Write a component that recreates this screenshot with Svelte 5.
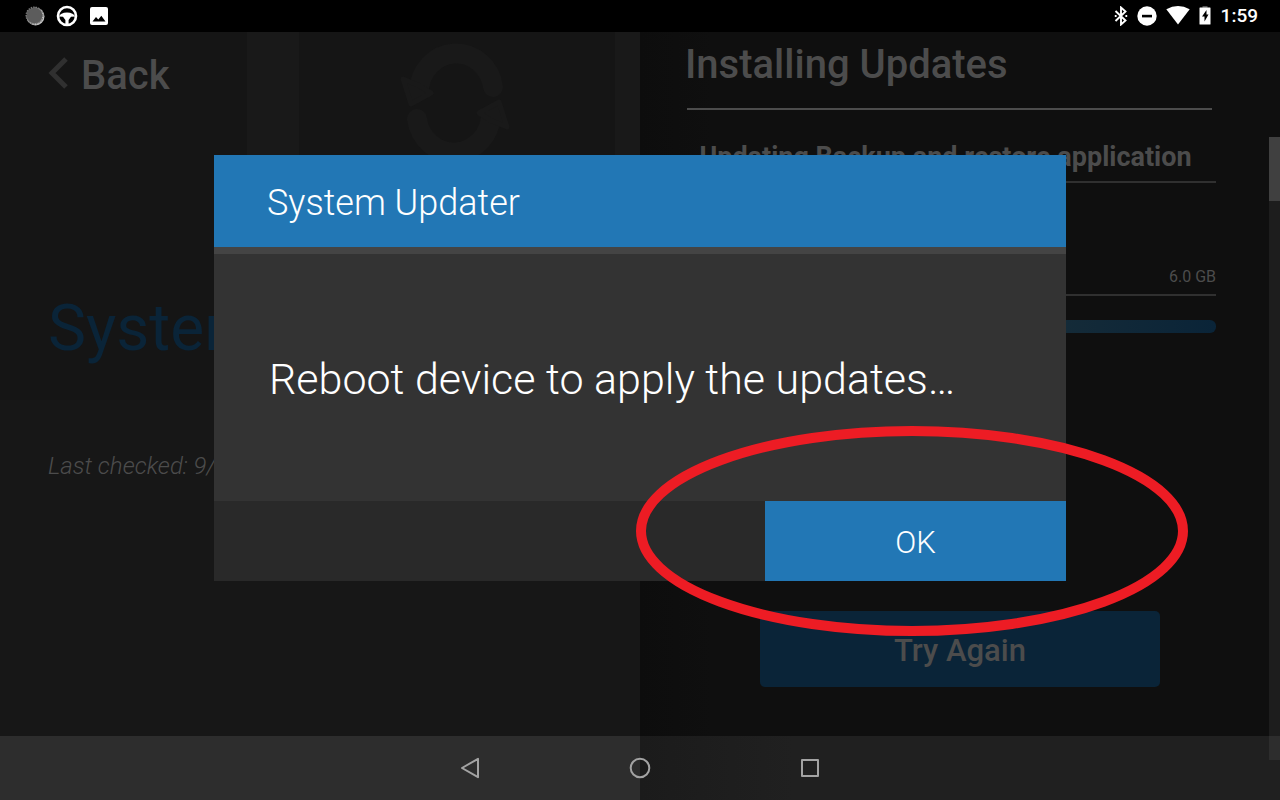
<script lang="ts">
	let dialogOpen = $state(true);

	const title = 'System Updater';
	const message = 'Reboot device to apply the updates…';
	const time = '1:59';

	function closeDialog() {
		dialogOpen = false;
	}
</script>

<div class="device">
	<header class="status-bar">
		<div class="status-group left">
			<svg width="20" height="20" viewBox="0 0 20 20" aria-hidden="true">
				<circle cx="10.500" cy="10.500" r="9" fill="#c4c4c4" />
				<circle cx="9.500" cy="9.500" r="8" fill="#5c5c5c" />
				<circle cx="9.500" cy="9.500" r="8.300" fill="none" stroke="#777" stroke-width="1.500" stroke-dasharray="1.500 1" />
			</svg>
			<svg width="22" height="22" viewBox="0 0 22 22" aria-hidden="true">
				<circle cx="11" cy="11" r="9" fill="none" stroke="#fff" stroke-width="2.600" />
				<path d="M2.500 11.500 L5 9 Q11 6.200 17 9 L19.500 11.500 L15 11.800 L12.600 15 L12.600 19.500 H9.400 V15 L7 11.800 Z" fill="#fff" />
			</svg>
			<svg width="20" height="20" viewBox="0 0 20 20" aria-hidden="true">
				<rect x="1" y="1" width="18" height="18" rx="2" fill="#fff" />
				<path d="M3.500 15.500 L7 11 L9.300 13.600 L12.300 9.800 L16.500 15.500 Z" fill="#000" />
			</svg>
		</div>
		<div class="status-group right">
			<svg width="14" height="20" viewBox="0 0 14 20" fill="none" stroke="#fff" stroke-width="1.900" aria-hidden="true">
				<path d="M1.500 5 L11.500 14.500 L7 18.500 V1.500 L11.500 5.500 L1.500 15" />
				<path d="M0.800 10 H2.600 M11.400 10 H13.200" />
			</svg>
			<svg width="20" height="20" viewBox="0 0 20 20" aria-hidden="true">
				<circle cx="10" cy="10" r="9.700" fill="#fff" />
				<rect x="5" y="8.800" width="10" height="2.600" fill="#000" />
			</svg>
			<svg width="24" height="20" viewBox="0 0 24 20" aria-hidden="true">
				<path d="M0.300 3.200 Q12 -3.200 23.700 3.200 L12 18.500 Z" fill="#fff" />
			</svg>
			<svg width="12" height="20" viewBox="0 0 12 20" aria-hidden="true">
				<path d="M3.500 -0.500 H8.500 V2 H3.500 Z" fill="#555" />
				<rect x="0.500" y="1.500" width="11" height="17" rx="0.500" fill="#fff" />
				<path d="M7.500 4 L3 10.500 H5.500 V15.500 L9.500 8.500 H7.500 Z" fill="#000" />
			</svg>
			<span class="clock">{time}</span>
		</div>
	</header>

	<main class="panels">
		<section class="panel overview">
			<div class="hero">
				<svg class="hero-art" width="112" height="120" viewBox="0 0 112 120" aria-hidden="true">
					<g fill="none" stroke="#191919" stroke-width="20" stroke-linecap="round">
						<path d="M93 44 A37.200 39 0 0 0 19 48" />
						<path d="M17 76 A37.200 39 0 0 0 91 72" />
					</g>
					<g fill="#191919" stroke="#191919" stroke-width="5" stroke-linejoin="round">
						<path d="M3 36 L11 61 L31 50 L18 42 Z" />
						<path d="M107 84 L99 59 L79 70 L92 78 Z" />
					</g>
				</svg>
				<button class="back" type="button">
					<svg width="20" height="32" viewBox="0 0 20 32" aria-hidden="true">
						<path d="M18 2 L4 16 L18 30" fill="none" stroke="#303030" stroke-width="5" />
					</svg>
					Back
				</button>
				<h1>System</h1>
			</div>
			<p class="checked">Last checked: 9/</p>
		</section>

		<section class="panel progress">
			<h2>Installing Updates</h2>
			<div class="details">
				<p class="current">Updating Backup and restore application</p>
				<p class="size">6.0 GB</p>
				<div class="bar"></div>
			</div>
			<button class="retry" type="button">Try Again</button>
			<div class="scrollbar"><div class="thumb"></div></div>
		</section>
	</main>

	<nav class="nav-bar">
		<button type="button" aria-label="Back">
			<svg width="24" height="24" viewBox="0 0 24 24">
				<path d="M20 2.800 V21.200 L4 12 Z" />
			</svg>
		</button>
		<button type="button" aria-label="Home">
			<svg width="24" height="24" viewBox="0 0 24 24">
				<circle cx="12" cy="12" r="9.300" />
			</svg>
		</button>
		<button type="button" aria-label="Recent apps">
			<svg width="24" height="24" viewBox="0 0 24 24">
				<rect x="4" y="4" width="16" height="16" />
			</svg>
		</button>
	</nav>

	{#if dialogOpen}
		<div class="overlay">
			<div class="dialog" role="dialog" aria-labelledby="dialog-title">
				<h2 id="dialog-title" class="dialog-title">{title}</h2>
				<p class="dialog-message">{message}</p>
				<div class="dialog-actions">
					<button type="button" onclick={closeDialog}>OK</button>
				</div>
				<svg class="highlight" width="552" height="210" viewBox="0 0 552 210" aria-hidden="true">
					<ellipse cx="276" cy="105" rx="271" ry="100" fill="none" stroke="#ed1c24" stroke-width="10" />
				</svg>
			</div>
		</div>
	{/if}
</div>

<style>
	:global(body) {
		background: #000;
	}

	.device {
		position: relative;
		display: flex;
		flex-direction: column;
		min-height: 100vh;
		overflow: hidden;
		font-family: Roboto, 'Liberation Sans', sans-serif;
		color: #4c4c4c;
	}

	h1,
	h2,
	p {
		margin: 0;
	}

	button {
		border: 0;
		padding: 0;
		background: none;
		color: inherit;
		font-family: inherit;
		cursor: pointer;
	}

	svg {
		display: block;
		flex: none;
	}

	.status-bar {
		display: flex;
		justify-content: space-between;
		align-items: center;
		height: 32px;
		padding: 0 22px 0 25px;
		background: #000;
		color: #fff;
	}

	.status-group {
		display: flex;
		align-items: center;
	}

	.status-group.left {
		gap: 11px;
	}

	.status-group.right {
		gap: 9px;
	}

	.clock {
		padding-left: 1px;
		font-size: 19px;
		font-weight: 500;
		line-height: 32px;
	}

	.panels {
		flex: 1;
		display: grid;
		grid-template-columns: 1fr 1fr;
	}

	.panel {
		position: relative;
		box-sizing: border-box;
		min-width: 0;
	}

	.overview {
		background: #171717;
	}

	.hero {
		position: relative;
		box-sizing: border-box;
		height: 368px;
		padding: 20px 48px 0;
		background: linear-gradient(
			to right,
			#151515 247px,
			#191919 247px 299px,
			#151515 299px 615px,
			#191919 615px
		);
	}

	.hero-art {
		position: absolute;
		top: 11px;
		left: 400px;
	}

	.back {
		display: flex;
		align-items: flex-start;
		gap: 13px;
		font-size: 40px;
		font-weight: 500;
		line-height: 48px;
	}

	.back svg {
		margin-top: 5px;
	}

	h1 {
		margin-top: 191px;
		color: #0a2438;
		font-size: 64px;
		font-weight: 400;
		line-height: 76px;
	}

	.checked {
		padding: 50px 48px 0;
		font-size: 24px;
		font-style: italic;
		font-weight: 300;
		line-height: 32px;
	}

	.progress {
		display: flex;
		flex-direction: column;
		padding: 9px 64px 48px 35px;
		background: linear-gradient(to right, #0d0d0d, #0f0f0f 72px);
	}

	.progress h2 {
		margin: 0 4px 0 12px;
		padding-bottom: 19px;
		border-bottom: 2px solid #4c4c4c;
		font-size: 40px;
		font-weight: 500;
		line-height: 48px;
		text-indent: -2px;
	}

	.current {
		padding: 31px 0 8px;
		border-bottom: 2px solid #303030;
		font-size: 27px;
		font-weight: 700;
		line-height: 32px;
		text-align: center;
	}

	.size {
		padding: 84px 0 7px;
		border-bottom: 2px solid #303030;
		font-size: 16px;
		line-height: 20px;
		text-align: right;
	}

	.bar {
		height: 13px;
		margin-top: 24px;
		border-radius: 6px;
		background: linear-gradient(to right, #152b38 70%, #0a2438);
	}

	.retry {
		width: 400px;
		height: 76px;
		margin: 278px 0 0 85px;
		padding-top: 4px;
		border-radius: 5px;
		background: #0a2438;
		font-size: 31px;
		font-weight: 500;
		line-height: 36px;
	}

	.scrollbar {
		position: absolute;
		z-index: 1;
		top: 105px;
		right: 0;
		bottom: -24px;
		width: 11px;
		background: rgba(255, 255, 255, 0.06);
	}

	.thumb {
		height: 64px;
		background: #404040;
	}

	.nav-bar {
		display: flex;
		justify-content: center;
		align-items: center;
		gap: 146px;
		height: 64px;
		background: linear-gradient(to right, #2d2d2d 50%, #1b1b1b 50%, #202020 62%);
	}

	.nav-bar svg {
		fill: none;
		stroke: #a3a3a3;
		stroke-width: 2;
		stroke-linejoin: round;
	}

	.overlay {
		position: absolute;
		z-index: 2;
		inset: 0 0 64px;
		display: grid;
		place-items: center;
	}

	.dialog {
		position: relative;
		width: 852px;
		background: #333;
		color: #fff;
		font-weight: 300;
	}

	.dialog-title {
		padding: 26px 53px 22px;
		border-bottom: 7px solid #444;
		background: #2277b5;
		background-clip: padding-box;
		font-size: 36px;
		font-weight: 300;
		line-height: 44px;
	}

	.dialog-message {
		padding: 99px 55px 96px;
		font-size: 43px;
		line-height: 52px;
	}

	.dialog-actions {
		display: flex;
		justify-content: flex-end;
		background: #292929;
	}

	.dialog-actions button {
		width: 301px;
		height: 80px;
		padding-top: 4px;
		background: #2277b5;
		font-size: 31px;
		font-weight: 300;
		line-height: 36px;
	}

	.highlight {
		position: absolute;
		right: -122px;
		bottom: -55px;
		pointer-events: none;
	}
</style>
